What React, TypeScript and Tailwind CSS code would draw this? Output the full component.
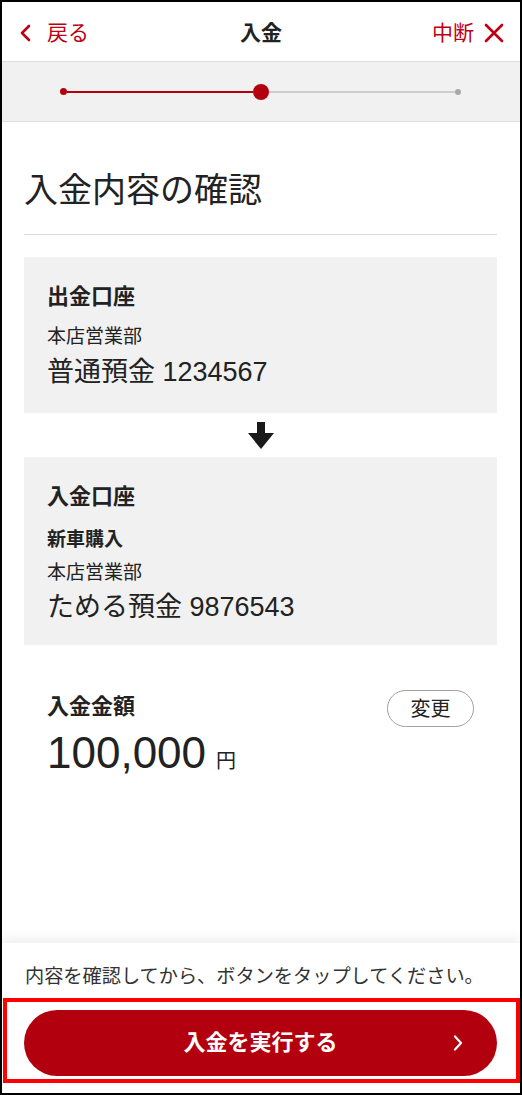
import React from "react";

const FONT = "font-['Liberation_Sans','Noto_Sans_CJK_JP',sans-serif]";

export default function App() {
  return (
    <div className={`relative w-[522px] h-[1095px] bg-white ${FONT} text-[#222]`}>
      <div className="flex flex-col h-full border-2 border-black overflow-hidden">
        {/* Header */}
        <div className="h-[60px] shrink-0 grid grid-cols-[1fr_auto_1fr] items-center border-b border-[#dedede] pt-[3px]">
          <div className="flex items-center pl-[17px]">
            <svg width="12" height="18" viewBox="0 0 12 18" className="mr-[16px]">
              <path d="M10 2 L3 9 L10 16" fill="none" stroke="#be0012" strokeWidth="2.6" strokeLinecap="round" strokeLinejoin="round" />
            </svg>
            <span className="text-[21px] leading-[28px] text-[#be0012]">戻る</span>
          </div>
          <div className="text-[21px] leading-[28px] font-bold text-[#222]">入金</div>
          <div className="flex items-center justify-end pr-[16px]">
            <span className="text-[21px] leading-[28px] text-[#be0012] mr-[10px]">中断</span>
            <svg width="20" height="20" viewBox="0 0 20 20">
              <path d="M2 2 L18 18 M18 2 L2 18" fill="none" stroke="#be0012" strokeWidth="2.6" strokeLinecap="round" />
            </svg>
          </div>
        </div>

        {/* Progress */}
        <div className="h-[60px] shrink-0 bg-[#f1f1f1] border-b border-[#dedede] flex items-center">
          <div className="flex items-center w-full ml-[58px] mr-[59px]">
            <div className="w-[7px] h-[7px] rounded-full bg-[#b3000f]" />
            <div className="flex-1 h-[2px] bg-[#b3000f]" />
            <div className="w-[16px] h-[16px] rounded-full bg-[#b3000f]" />
            <div className="flex-1 h-[2px] bg-[#cccccc]" />
            <div className="w-[6px] h-[6px] rounded-full bg-[#a8a8a8]" />
          </div>
        </div>

        {/* Main */}
        <div className="flex-1 pl-[22px] pr-[23px] pt-[44px]">
          <h1 className="text-[34px] leading-[48px] font-normal text-[#222]">入金内容の確認</h1>
          <div className="mt-[20px] h-px bg-[#dcdcdc]" />

          {/* Card 1 */}
          <div className="mt-[22px] bg-[#f1f1f1] px-[23px] pt-[24px] pb-[23px]">
            <div className="text-[22px] leading-[32px] font-bold">出金口座</div>
            <div className="mt-[10px] text-[19px] leading-[28px] text-[#222]">本店営業部</div>
            <div className="mt-[3px] text-[27px] leading-[36px] text-[#222]">普通預金 1234567</div>
          </div>

          {/* Arrow */}
          <div className="h-[44px] flex items-center justify-center">
            <svg width="26" height="27" viewBox="0 0 26 27" className="ml-[1px]">
              <rect x="9" y="0" width="8" height="13" fill="#1a1a1a" />
              <polygon points="0,11 26,11 13,27" fill="#1a1a1a" />
            </svg>
          </div>

          {/* Card 2 */}
          <div className="bg-[#f1f1f1] px-[23px] pt-[24px] pb-[20px]">
            <div className="text-[22px] leading-[32px] font-bold">入金口座</div>
            <div className="mt-[13px] text-[19px] leading-[28px] font-bold">新車購入</div>
            <div className="mt-[5px] text-[19px] leading-[28px] text-[#222]">本店営業部</div>
            <div className="mt-[2px] text-[27px] leading-[36px] text-[#222]">ためる預金 9876543</div>
          </div>

          {/* Amount */}
          <div className="mt-[46px] px-[23px] flex justify-between items-start">
            <div>
              <div className="text-[22px] leading-[32px] font-bold">入金金額</div>
              <div className="mt-[4px] flex items-baseline leading-[52px]">
                <span className="text-[44px] text-[#222]">100,000</span>
                <span className="ml-[10px] text-[20px] text-[#222]">円</span>
              </div>
            </div>
            <button className="-mt-[1px] w-[87px] h-[37px] rounded-full border border-[#a0a0a0] bg-white text-[20px] leading-[28px] text-[#222] flex items-center justify-center">
              変更
            </button>
          </div>
        </div>

        {/* Footer */}
        <div className="shrink-0 bg-white shadow-[0_-6px_10px_rgba(0,0,0,0.06)] pl-[22px] pr-[20px] pt-[20px] pb-[17px]">
          <p className="text-[19.2px] leading-[28px] text-[#333] pl-[1px] whitespace-nowrap">内容を確認してから、ボタンをタップしてください。</p>
          <button className="relative mt-[19px] w-[473px] h-[66px] rounded-full bg-[#b3000f] flex items-center justify-center">
            <span className="text-[22px] leading-[30px] font-bold text-white">入金を実行する</span>
            <svg width="10" height="16" viewBox="0 0 10 16" className="absolute right-[34px] top-1/2 -translate-y-1/2">
              <path d="M2 1.5 L8 8 L2 14.5" fill="none" stroke="#ffffff" strokeWidth="2.2" strokeLinecap="round" strokeLinejoin="round" />
            </svg>
          </button>
        </div>
      </div>

      {/* Annotation box */}
      <div className="absolute left-[3px] top-[998px] w-[517px] h-[85px] border-4 border-[#ff0000] pointer-events-none" />
    </div>
  );
}
